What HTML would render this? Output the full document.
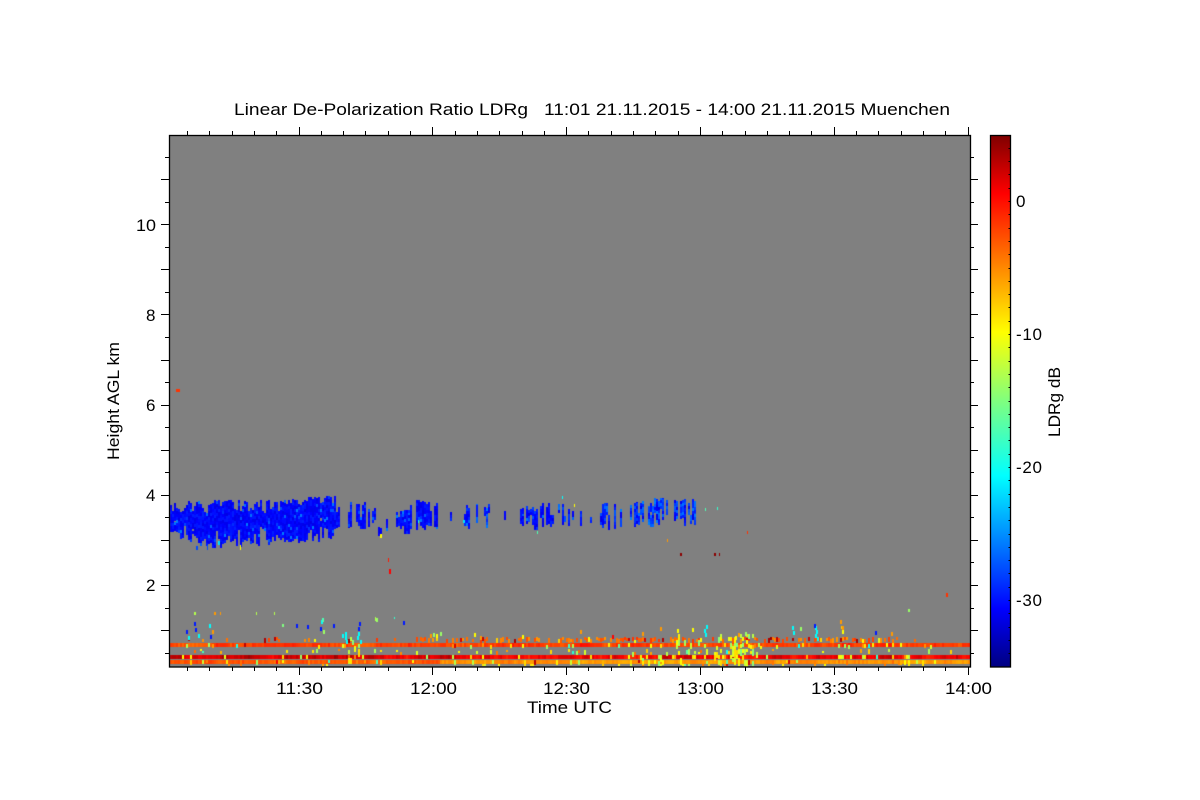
<!DOCTYPE html>
<html>
<head>
<meta charset="utf-8">
<title>Linear De-Polarization Ratio LDRg</title>
<style>
html,body{margin:0;padding:0;background:#fff;width:1200px;height:800px;overflow:hidden}
#c{position:absolute;left:169px;top:135px}
#s{position:absolute;left:0;top:0}
text{font-family:"Liberation Sans",Arial,sans-serif;font-size:17px;fill:#000}
</style>
</head>
<body>
<canvas id="c" width="802" height="532"></canvas>
<svg id="s" width="1200" height="800" xmlns="http://www.w3.org/2000/svg">
<defs>
<linearGradient id="jet" x1="0" y1="1" x2="0" y2="0">
<stop offset="0" stop-color="#000080"/>
<stop offset=".11" stop-color="#0000ff"/>
<stop offset=".36" stop-color="#00ffff"/>
<stop offset=".5" stop-color="#7fff7f"/>
<stop offset=".63" stop-color="#ffff00"/>
<stop offset=".89" stop-color="#ff0000"/>
<stop offset="1" stop-color="#800000"/>
</linearGradient>
</defs>
<rect x="990.5" y="135.5" width="20" height="531.5" fill="url(#jet)" stroke="#000" stroke-width="1.3"/>
<rect x="169.5" y="135.5" width="801" height="531.5" fill="none" stroke="#000" stroke-width="1.3"/>
<path id="t" fill="none" stroke="#000" stroke-width="1"/>
<text x="234" y="115" textLength="716" lengthAdjust="spacingAndGlyphs" xml:space="preserve" style="white-space:pre">Linear De-Polarization Ratio LDRg   11:01 21.11.2015 - 14:00 21.11.2015 Muenchen</text>
<text x="136" y="231" textLength="20" lengthAdjust="spacingAndGlyphs">10</text>
<text x="146" y="321">8</text>
<text x="146" y="411">6</text>
<text x="146" y="501">4</text>
<text x="146" y="591">2</text>
<text x="276" y="694" textLength="47" lengthAdjust="spacingAndGlyphs">11:30</text>
<text x="410" y="694" textLength="47" lengthAdjust="spacingAndGlyphs">12:00</text>
<text x="543" y="694" textLength="47" lengthAdjust="spacingAndGlyphs">12:30</text>
<text x="677" y="694" textLength="47" lengthAdjust="spacingAndGlyphs">13:00</text>
<text x="811" y="694" textLength="47" lengthAdjust="spacingAndGlyphs">13:30</text>
<text x="945" y="694" textLength="47" lengthAdjust="spacingAndGlyphs">14:00</text>
<text x="527" y="713" textLength="85" lengthAdjust="spacingAndGlyphs">Time UTC</text>
<text transform="translate(119,460) rotate(-90)" textLength="118" lengthAdjust="spacingAndGlyphs">Height AGL km</text>
<text x="1016" y="207">0</text>
<text x="1016" y="340" textLength="26" lengthAdjust="spacing">-10</text>
<text x="1016" y="473" textLength="26" lengthAdjust="spacing">-20</text>
<text x="1016" y="606" textLength="26" lengthAdjust="spacing">-30</text>
<text transform="translate(1060,437) rotate(-90)" textLength="70" lengthAdjust="spacingAndGlyphs">LDRg dB</text>
</svg>
<script>
(function(){
/* axis ticks */
var d="",i,y,x,len;
var Y0=224.2,DY=22.55;
for(i=-4;i<=19;i++){
  y=Math.round(Y0+i*DY)+.5;
  if(y<136||y>666)continue;
  len=(i%2===0)?8:4;
  d+="M"+(169-len)+" "+y+"H169M970 "+y+"H"+(970+len);
}
var X0=298.5,DX=22.3;
for(i=-5;i<=30;i++){
  x=Math.round(X0+i*DX)+.5;
  if(x<170||x>970)continue;
  len=(((i%6)+6)%6===0)?8:4;
  d+="M"+x+" 135V"+(135-len)+"M"+x+" 667V"+(667+len);
}
for(i=-4;i<=35;i++){
  y=Math.round(201+i*13.3)+.5;
  if(y<137||y>665)continue;
  d+="M1008.5 "+y+"H1010";
}
document.getElementById("t").setAttribute("d",d);

/* data */
var s=20151121;
function R(){s|=0;s=s+0x6D2B79F5|0;var t=Math.imul(s^s>>>15,1|s);t=t+Math.imul(t^t>>>7,61|t)^t;return((t^t>>>14)>>>0)/4294967296;}
function jet(dB){
  var v=(dB+35)/40;if(v<0)v=0;if(v>1)v=1;
  var r=Math.min(1,Math.max(0,Math.min(4*v-1.5,-4*v+4.5)));
  var g=Math.min(1,Math.max(0,Math.min(4*v-.5,-4*v+3.5)));
  var b=Math.min(1,Math.max(0,Math.min(4*v+.5,-4*v+2.5)));
  return "rgb("+Math.round(r*255)+","+Math.round(g*255)+","+Math.round(b*255)+")";
}
var cv=document.getElementById("c"),g=cv.getContext("2d");
g.fillStyle="#808080";g.fillRect(0,0,802,532);
function P(ax,ay,w,h,col){g.fillStyle=col;g.fillRect(ax-169,ay-135,w,h);}
var CW=2,N=Math.ceil(801/CW);
function cx(c){return Math.round(170+c*CW);}

/* blue cloud envelope: x, top, bottom, density, light */
var K=[[169,503,531,.95,.1],[180,501,537,.95,.1],[195,500,546,.95,.1],[215,500,548,.95,.1],[240,500,545,.95,.1],
[260,500,543,.95,.1],[280,500,541,.95,.1],[300,498,541,.95,.1],[320,496,540,.95,.1],[334,495,538,.95,.1],
[337,504,526,.55,.15],[350,502,529,.6,.15],[362,502,528,.75,.15],[376,505,527,.5,.15],[378,520,536,.2,.1],
[384,520,536,0,.1],[393,512,526,.45,.2],[408,509,526,.55,.2],[412,499,528,.85,.2],[437,502,528,.55,.2],
[440,515,520,.04,.3],[460,505,525,.04,.3],[465,503,527,.38,.35],[498,503,526,.4,.35],[503,510,525,.04,.3],
[511,510,524,.3,.3],[530,505,524,.35,.3],[536,502,529,.55,.25],[565,504,528,.4,.25],[572,510,520,.04,.5],
[592,510,526,.18,.6],[600,497,527,.65,.6],[618,499,529,.5,.55],[625,510,520,.08,.7],[632,497,526,.6,.75],
[697,499,523,.55,.7],[702,505,520,0,.7]];
function env(x){
  for(var i=0;i<K.length-1;i++){
    if(x>=K[i][0]&&x<=K[i+1][0]){
      var f=(x-K[i][0])/(K[i+1][0]-K[i][0]),o=[];
      for(var j=1;j<5;j++)o.push(K[i][j]+(K[i+1][j]-K[i][j])*f);
      return o;
    }
  }
  return null;
}
function blueRun(x,w,a,b,light){
  for(var yy=Math.round(a);yy<b;yy+=3){
    var dB=R()<light?-29+R()*4:-31+R()*2.2;
    P(x,yy,w,3,jet(dB));
  }
}
var c,yy;
for(c=0;c<N;c++){
  x=cx(c);var w=cx(c+1)-x,e=env(x);
  if(!e)continue;
  var den=e[2];
  if(den<=0)continue;
  var span=e[1]-e[0];
  if(den>.9){
    /* dense core: full column with jagged ends and occasional gaps */
    var top=e[0]+Math.pow(R(),1.7)*span*.3;
    var bot=e[1]-Math.pow(R(),1.7)*span*.38;
    if(R()<.12){
      var mid=top+R()*(bot-top);
      blueRun(x,w,top,mid-2,e[3]);
      blueRun(x,w,mid+2,bot,e[3]);
    } else blueRun(x,w,top,bot,e[3]);
  } else {
    if(R()>den+.08)continue;
    var runs=R()<den?2:1,q;
    for(q=0;q<runs;q++){
      var l=5+R()*(6+den*22);
      var st=e[0]+R()*Math.max(1,span-l);
      blueRun(x,w,st,st+l,e[3]);
    }
  }
}

/* smooth noise for correlated runs */
function noise(n,k){
  var a=[],i,j;for(i=0;i<n;i++)a.push(R());
  var b=[];for(i=0;i<n;i++){var t=0,m=0;for(j=-k;j<=k;j++){if(a[i+j]!==undefined){t+=a[i+j];m++;}}b.push(t/m);}
  return b;
}
var nA=noise(N,3),nB=noise(N,2),nC=noise(N,4);
function act(x){
  var a=.03;
  a+=.34*Math.exp(-Math.pow((x-738)/20,2));
  a+=.12*Math.exp(-Math.pow((x-690)/70,2));
  a+=.2*Math.exp(-Math.pow((x-352)/10,2));
  a+=.08*Math.exp(-Math.pow((x-190)/15,2));
  a+=.08*Math.exp(-Math.pow((x-600)/60,2));
  a+=.08*Math.exp(-Math.pow((x-860)/60,2));
  return a;
}
function spk(){
  var r=R();
  if(r<.34)return -10.5+R()*2.5;  /* yellow */
  if(r<.55)return -7+R()*3;       /* orange */
  if(r<.82)return -14+R()*3;      /* green */
  if(r<.93)return -20+R()*4;      /* cyan */
  return 0+R()*3;
}
for(c=0;c<N;c++){
  x=cx(c);var w2=cx(c+1)-x,a=act(x);
  /* patches above band */
  var pd=x<260?.08:x<420?.16:.5;
  if(x>900)pd=.05;
  if(R()<pd){
    P(x,637+Math.round(R()*2),w2,3+Math.round(R()*2),jet(R()<.8?-2-R()*4:(R()<.5?1+R()*3:-8-R()*3)));
  }
  /* upper band */
  P(x,643,w2,4,jet(-nA[c]*5+R()*1.5-.75));
  /* speckle between */
  if(R()<.07+a*.7){P(x,649+Math.round(R()*3),w2,2+Math.round(R()*3),jet(spk()));}
  /* red band */
  var rb=(nB[c]-.5)*7+(x<450?.8:-.3)+R()*1.5;
  P(x,655,w2,4,jet(rb));
  /* lower orange band */
  var nn=nA[(c+40)%N];
  var ob=x<440?-2-nn*4:-4.5-nn*4;
  P(x,660,w2,4,jet(ob+R()*1.2));
  /* speckles on bands */
  if(R()<.07+a*.8){P(x,643+Math.round(R()*2),w2,4,jet(spk()));}
  if(R()<.04+a*.7){P(x,655,w2,4,jet(spk()));}
  if(R()<.06+a*.7){P(x,660,w2,3+Math.round(R()*3),jet(spk()));}
  if(R()<.03+a*.4){P(x,664,w2,2,jet(spk()));}
  /* storm column streaks */
  if(a>.15){
    for(yy=634;yy<664;yy+=3){
      if(R()<(a-.1)*.7)P(x,yy,w2,3+Math.round(R()*4),jet(-15+R()*7));
    }
  }
}
/* clusters above the low layer */
var cl=[[195,628,"blue"],[186,630,"blue"],[194,622,"blue"],[198,634,"cyan"],[188,636,"cyan"],[210,635,"blue"],[212,630,"orange"],[209,624,"cyan"],
[296,624,"blue"],[307,625,"blue"],[321,620,"cyan"],[320,627,"blue"],[323,630,"green"],[333,624,"blue"],[342,634,"cyan"],[345,632,"cyan"],
[345,636,"cyan"],[358,632,"cyan"],[357,636,"cyan"],[358,627,"blue"],[359,622,"blue"],[360,640,"cyan"],[346,640,"cyan"],[403,621,"blue"],
[376,618,"green"],[430,634,"orange"],[433,633,"green"],[436,634,"yellow"],[440,632,"green"],[705,633,"cyan"],[704,629,"cyan"],[706,625,"cyan"],
[792,626,"cyan"],[793,631,"cyan"],[800,627,"green"],[815,626,"cyan"],[816,630,"cyan"],[815,634,"cyan"],[817,637,"cyan"],[814,624,"blue"],[840,620,"orange"],
[842,626,"orange"],[842,630,"yellow"],[875,631,"blue"],[891,632,"orange"],[745,632,"green"],[735,636,"yellow"],[738,633,"orange"],[700,638,"yellow"],
[692,628,"yellow"],[660,627,"orange"],[677,629,"yellow"],[612,635,"red"],[642,632,"orange"],[580,630,"orange"],[522,635,"yellow"],[480,636,"orange"],[474,633,"yellow"]];
var cm={blue:-29,cyan:-20,green:-14,yellow:-10,orange:-6,red:0};
cl.forEach(function(p){P(p[0],p[1],2,4,jet(cm[p[2]]));});
/* isolated specks */
var iso=[[176,389,4,3,-2],[389,569,2,5,0],[388,558,1,4,-1],[380,534,2,4,-10],[218,541,2,4,-21],[240,545,1,5,-10],[196,546,2,4,-27],[207,545,1,5,-27],
[680,553,2,3,4.5],[714,553,2,3,4.5],[719,553,1,3,4.5],[747,531,1,3,-2],[667,539,1,3,-6],[946,593,2,4,-2],[908,609,2,3,-14],[562,496,1,3,-20],[574,504,1,3,-10],
[537,531,1,3,-17],[705,508,1,3,-17],[717,507,1,3,-18],[194,612,2,3,-13],[214,612,2,3,-6],[220,612,1,3,-6],[256,612,1,3,-13],[274,612,1,3,-13],[375,617,1,4,-13],
[394,617,1,2,-18],[322,618,2,4,-17],[841,626,1,3,-8],[282,624,2,3,-15],[418,520,1,3,-19],[463,520,2,3,-21]];
iso.forEach(function(p){P(p[0],p[1],p[2],p[3],jet(p[4]));});
})();
</script>
</body>
</html>
